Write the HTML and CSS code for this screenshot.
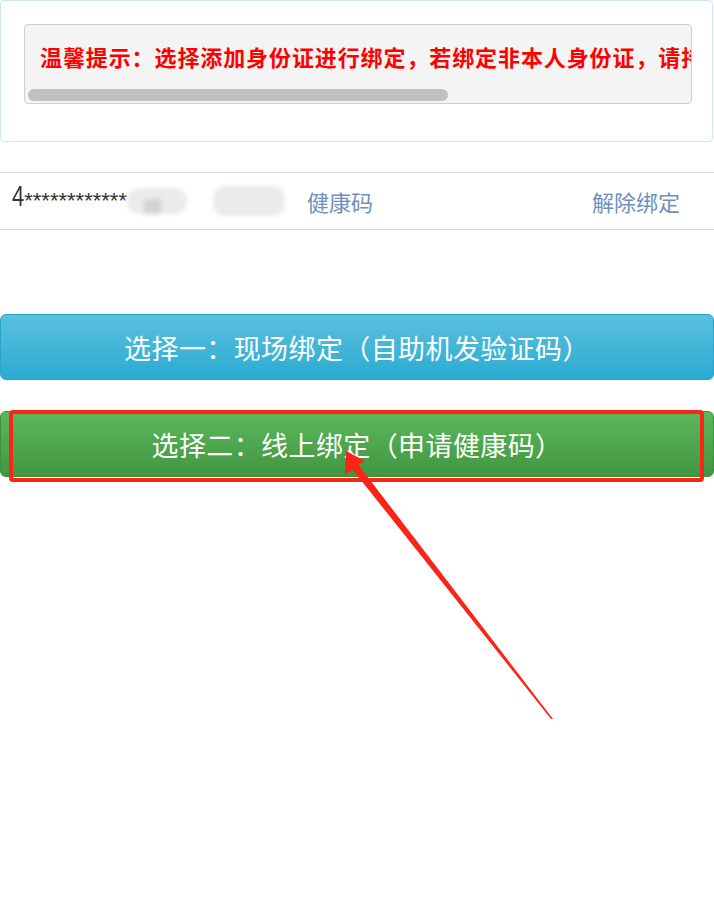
FILE: index.html
```html
<!DOCTYPE html>
<html lang="zh-CN">
<head>
    <meta charset="UTF-8">
    <meta name="viewport" content="width=device-width, initial-scale=1.0">
    <title>绑定身份证</title>
    <link rel="stylesheet" href="styles.css">
</head>
<body>

<div class="page">
    <!-- 温馨提示 -->
    <div class="notice-panel">
        <div class="notice-box">
            <div class="notice-scroll">
                <p class="notice-text">温馨提示：选择添加身份证进行绑定，若绑定非本人身份证，请持本人身份证重新绑定后再申请。</p>
            </div>
            <div class="scroll-track"><span class="scroll-thumb"></span></div>
        </div>
    </div>

    <!-- 已绑定的证件 -->
    <div class="card-row">
        <span class="card-no"><span class="first-digit">4</span>************</span>
        <span class="blur blur-a"><i></i></span>
        <span class="blur blur-b"></span>
        <a class="row-link health-link" href="#">健康码</a>
        <a class="row-link unbind-link" href="#">解除绑定</a>
    </div>

    <div class="btn-group">
        <button class="btn btn-info">选择一：现场绑定（自助机发验证码）</button>
        <div class="btn-wrap">
            <button class="btn btn-success">选择二：线上绑定（申请健康码）</button>
            <span class="mark-box"></span>
        </div>
    </div>

    <!-- 标注箭头 -->
    <svg class="mark-arrow" width="714" height="909" viewBox="0 0 714 909">
        <polygon points="346,451 365,461 358.5,465 553,719 551,719 352.5,469.5 345,475" fill="#fa2418"/>
    </svg>
</div>

</body>
</html>
```

FILE: styles.css
```css
body {
    margin: 0;
    padding: 0;
    background-color: #fff;
    font-family: "Noto Sans CJK SC", sans-serif;
}

.page {
    position: relative;
    width: 714px;
    min-height: 909px;
}

.notice-panel {
    margin-right: 1px;
    padding: 23px 20px 37px 23px;
    border: 1px solid #cfe6ef;
    border-radius: 4px;
}

.notice-box {
    border: 1px solid #cfcfcf;
    border-radius: 4px;
    background-color: #f4f4f4;
}

.notice-scroll {
    overflow: hidden;
}

.notice-text {
    margin: 0;
    padding: 0 16px 0 15px;
    height: 62px;
    line-height: 62px;
    white-space: nowrap;
    color: #f00;
    font-size: 22px;
    font-weight: bold;
    letter-spacing: 0.9px;
}

.scroll-track {
    height: 16px;
    padding: 2px 0 2px 3px;
    box-sizing: border-box;
}

.scroll-thumb {
    display: block;
    width: 420px;
    height: 12px;
    border-radius: 6px;
    background-color: #bfbfc4;
}

.card-row {
    display: flex;
    align-items: center;
    margin-top: 30px;
    height: 56px;
    padding: 0 34px 0 12px;
    border-top: 1px solid #dcdcdc;
    border-bottom: 1px solid #dcdcdc;
}

.card-no {
    font-family: "Liberation Sans", Arial, sans-serif;
    font-size: 22px;
    color: #333;
}

.first-digit {
    display: inline-block;
    transform: scaleY(1.35);
    transform-origin: bottom;
}

.blur {
    position: relative;
    display: inline-block;
    background-color: #ebebeb;
    border-radius: 12px;
    filter: blur(2px);
}

.blur-a {
    width: 60px;
    height: 26px;
}

.blur-a i {
    position: absolute;
    left: 17px;
    top: 11px;
    width: 17px;
    height: 15px;
    background-color: #d3d3d3;
}

.blur-b {
    width: 72px;
    height: 30px;
    margin-left: 26px;
}

.row-link {
    font-size: 22px;
    color: #6f8fbf;
    text-decoration: none;
}

.health-link {
    margin-left: 22px;
}

.unbind-link {
    margin-left: auto;
}

.btn-group {
    margin-top: 84px;
}

.btn {
    display: block;
    width: 100%;
    height: 66px;
    border-radius: 6px;
    color: #fff;
    font-family: "Noto Sans CJK SC", sans-serif;
    font-size: 27px;
    letter-spacing: 0.4px;
    cursor: pointer;
}

.btn-info {
    background-image: linear-gradient(to bottom, #5bc0de 0, #2aabd2 100%);
    border: 1px solid #28a4c9;
}

.btn-success {
    background-image: linear-gradient(to bottom, #5cb85c 0, #419641 100%);
    border: 1px solid #3e8f3e;
}

.btn-wrap {
    position: relative;
    margin-top: 31px;
}

.mark-box {
    position: absolute;
    left: 9px;
    right: 10px;
    top: -1px;
    bottom: -5px;
    border: 4px solid #fa2418;
    border-radius: 4px;
}

.mark-arrow {
    position: absolute;
    left: 0;
    top: 0;
    pointer-events: none;
}
```
